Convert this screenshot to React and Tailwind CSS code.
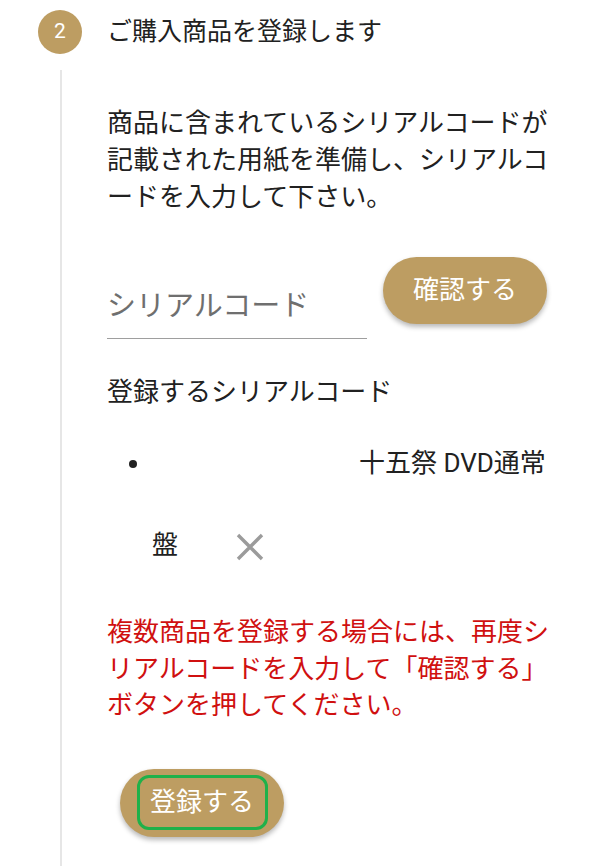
const FONT = { fontFamily: 'Roboto, "Noto Sans CJK JP", sans-serif' }

function CloseIcon() {
  return (
    <svg width="28" height="28" viewBox="0 0 28 28" fill="none">
      <path d="M2 2 L26 26 M26 2 L2 26" stroke="#9b9b9b" strokeWidth="3.4" />
    </svg>
  )
}

export default function App() {
  return (
    <div className="min-h-screen w-[600px] bg-white text-[#212121]" style={FONT}>
      {/* step header */}
      <div className="flex items-center pl-[38px] pt-[10px]">
        <div className="flex h-[44px] w-[44px] items-center justify-center rounded-full bg-[#bd9d62] text-[21px] text-white">
          2
        </div>
        <h2 className="ml-[25px] text-[25px] leading-[30px]">ご購入商品を登録します</h2>
      </div>

      {/* step content */}
      <div className="ml-[60px] mt-[16px] border-l-2 border-[#e6e6e6] pb-[40px] pl-[45px] pr-[40px] pt-[35px] text-[26px] leading-[37px]">
        <p>商品に含まれているシリアルコードが記載された用紙を準備し、シリアルコードを入力して下さい。</p>

        <div className="mt-[41px] flex items-start gap-[16px]">
          <input
            type="text"
            placeholder="シリアルコード"
            className="mt-[16px] h-[66px] w-[260px] border-b border-[#9e9e9e] bg-transparent text-[29px] text-[#212121] outline-none placeholder:text-[#6f6f6f]"
            style={FONT}
          />
          <button className="h-[67px] w-[164px] rounded-full bg-[#bd9d62] text-[26px] text-white shadow-[0_3px_5px_rgba(0,0,0,0.28)]">
            確認する
          </button>
        </div>

        <p className="mt-[35px]">登録するシリアルコード</p>

        <ul className="mb-[2px] mt-[34px] list-disc pl-[45px]">
          <li>
            <span className="inline-block w-[207px] text-white">&nbsp;</span>
            十五祭 DVD通常盤
            <button className="ml-[58px] inline-flex h-[130px] items-center align-middle">
              <CloseIcon />
            </button>
          </li>
        </ul>

        <p className="leading-[36.5px] text-[#d01010]">
          複数商品を登録する場合には、再度シリアルコードを入力して「確認する」ボタンを押してください。
        </p>

        <button className="ml-[13px] mt-[45px] flex h-[68px] w-[164px] items-center justify-center rounded-full bg-[#bd9d62] shadow-[0_3px_5px_rgba(0,0,0,0.28)]">
          <span className="flex h-[55px] w-[131px] items-center justify-center rounded-[12px] border-[3px] border-[#1fb14a] text-[26px] text-white">
            登録する
          </span>
        </button>
      </div>
    </div>
  )
}
